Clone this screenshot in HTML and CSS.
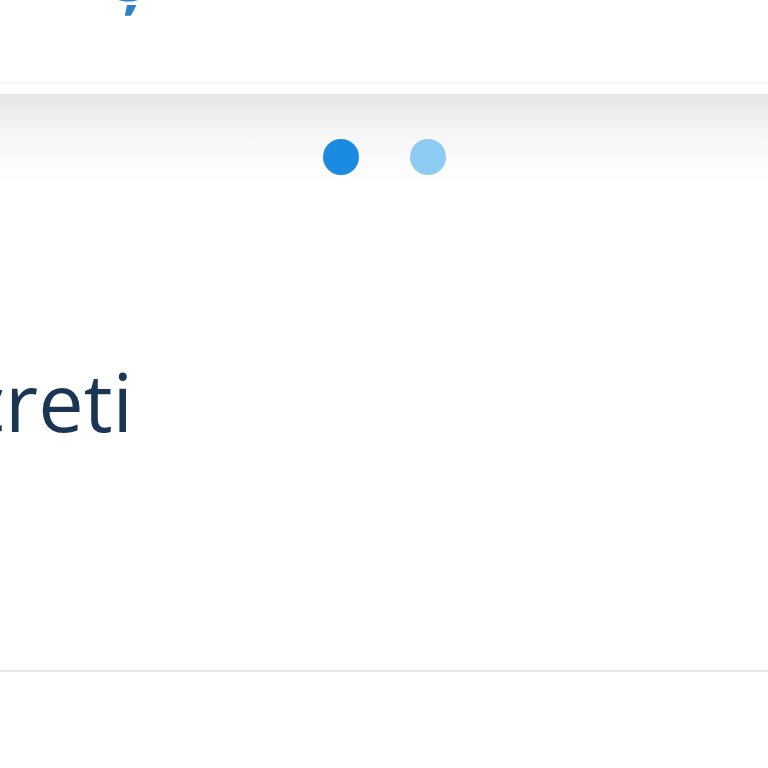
FILE: index.html
```html
<!DOCTYPE html>
<html lang="ro">
<head>
<meta charset="utf-8">
<link rel="stylesheet" href="styles.css">
</head>
<body>
<header class="top">
  <div class="brand">ş</div>
</header>
<div class="gap"></div>
<section class="slider">
  <div class="dots">
    <span class="dot active"></span>
    <span class="dot"></span>
  </div>
  <div class="title-row">
    <h1 class="title">Discreti</h1>
  </div>
</section>
<div class="rule"></div>
</body>
</html>
```
FILE: styles.css
```css
html, body {
  margin: 0;
  padding: 0;
  background: #ffffff;
  font-family: "Open Sans", "Noto Sans", sans-serif;
  overflow: hidden;
  width: 768px;
  height: 768px;
}
.top {
  height: 82px;
  overflow: hidden;
  border-bottom: 2px solid #f5f5f5;
}
.brand {
  font-size: 66px;
  line-height: 64px;
  font-weight: 700;
  color: #2f80c4;
  margin-top: -57px;
  padding-left: 114px;
}
.gap {
  height: 10px;
}
.slider {
  background: linear-gradient(#e6e6e6 0px, #f6f6f6 40px, #ffffff 90px);
  height: 576px;
  display: flex;
  flex-direction: column;
}
.dots {
  display: flex;
  justify-content: center;
  gap: 51px;
  padding-top: 45px;
}
.dot {
  width: 36px;
  height: 36px;
  border-radius: 50%;
  background: #8ecbf2;
}
.dot.active {
  background: #1a8be0;
}
.title-row {
  display: flex;
  justify-content: flex-end;
  width: 133px;
  margin-top: 176px;
}
.title {
  margin: 0;
  font-size: 81px;
  line-height: 100px;
  font-weight: 500;
  color: #1a3654;
  white-space: nowrap;
}
.rule {
  height: 2px;
  background: #e6e6e6;
}
```
